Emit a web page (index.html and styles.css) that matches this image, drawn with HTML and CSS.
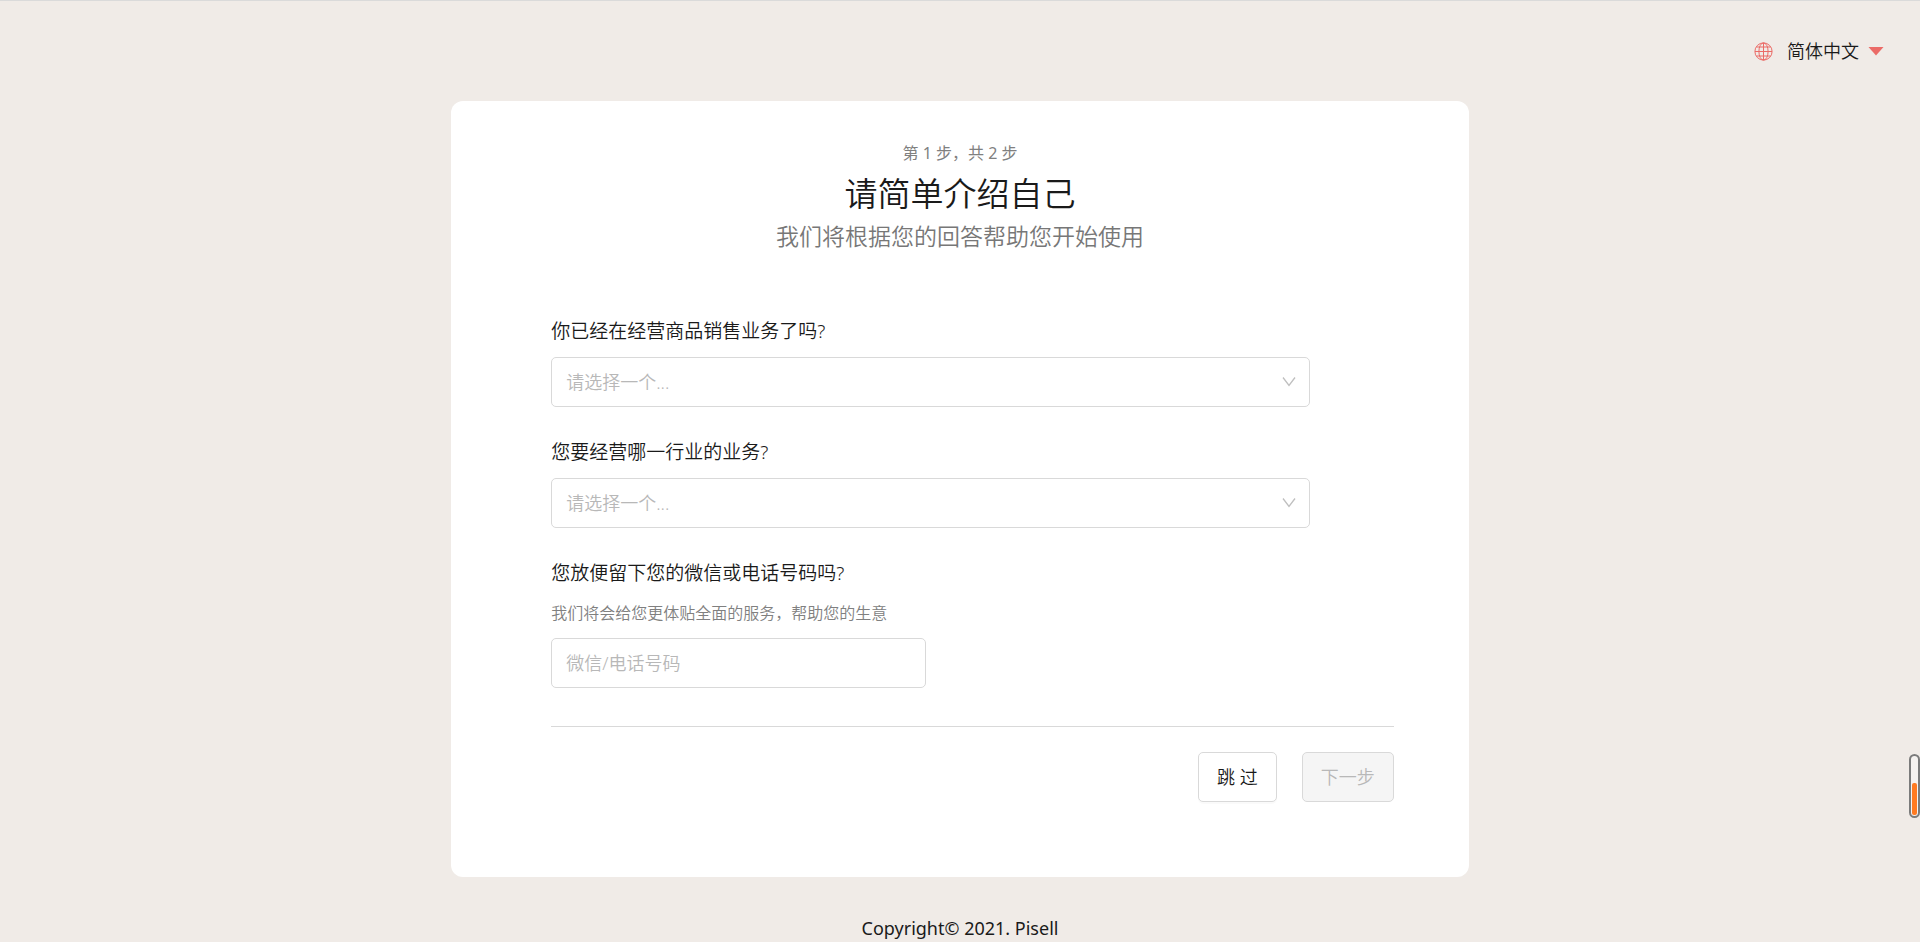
FILE: index.html
```html
<!DOCTYPE html>
<html lang="zh-CN">
<head>
<meta charset="utf-8">
<meta name="viewport" content="width=device-width, initial-scale=1">
<title>Pisell</title>
<link rel="stylesheet" href="styles.css">
</head>
<body>
<div class="page">
  <header class="header">
    <button class="language" type="button">
      <svg class="globe" viewBox="0 0 19 19" aria-hidden="true">
        <circle cx="9.5" cy="9.5" r="8.6"/>
        <ellipse cx="9.5" cy="9.5" rx="4.6" ry="8.6"/>
        <path d="M9.5 1v17M1 9.5h17M2.5 5h14M2.5 14h14"/>
      </svg>
      <span>简体中文</span>
      <svg class="caret" viewBox="0 0 16 9" aria-hidden="true"><path d="M0.5 0h15L8 8.5z"/></svg>
    </button>
  </header>

  <main class="card">
    <div class="intro">
      <p class="step">第 1 步，共 2 步</p>
      <h1 class="title">请简单介绍自己</h1>
      <p class="subtitle">我们将根据您的回答帮助您开始使用</p>
    </div>

    <form class="form">
      <div class="field">
        <label class="label" for="selling">你已经在经营商品销售业务了吗?</label>
        <div class="select-box">
          <select class="control select" id="selling"><option>请选择一个...</option></select>
          <svg class="chevron" viewBox="0 0 14 10" aria-hidden="true"><path d="M1 0.5l6 8 6-8"/></svg>
        </div>
      </div>

      <div class="field">
        <label class="label" for="industry">您要经营哪一行业的业务?</label>
        <div class="select-box">
          <select class="control select" id="industry"><option>请选择一个...</option></select>
          <svg class="chevron" viewBox="0 0 14 10" aria-hidden="true"><path d="M1 0.5l6 8 6-8"/></svg>
        </div>
      </div>

      <div class="field">
        <label class="label" for="contact">您放便留下您的微信或电话号码吗?</label>
        <p class="hint" id="contact-hint">我们将会给您更体贴全面的服务，帮助您的生意</p>
        <input class="control text-input" id="contact" type="text" placeholder="微信/电话号码" aria-describedby="contact-hint">
      </div>

      <div class="actions">
        <button class="button" type="button">跳 过</button>
        <button class="button" type="submit" disabled>下一步</button>
      </div>
    </form>
  </main>

  <footer class="footer">Copyright© 2021. Pisell</footer>
</div>
<div class="gauge"><div class="gauge-level"></div></div>
</body>
</html>
```
FILE: styles.css
```css
* {
  box-sizing: border-box;
}

body {
  margin: 0;
  background: #f0ebe7;
  color: #1a1a1a;
  font-family: "Noto Sans", "Noto Sans CJK SC", sans-serif;
  font-size: 18px;
  font-weight: 350;
  line-height: 28px;
}

button,
input,
select {
  font: inherit;
  color: inherit;
}

p,
h1 {
  margin: 0;
  font-weight: inherit;
}

.page {
  display: flex;
  flex-direction: column;
  min-height: 100vh;
  border-top: 1px solid #dadada;
}

.header {
  display: flex;
  justify-content: flex-end;
  align-items: center;
  height: 100px;
  padding: 0 36px;
}

.language {
  display: flex;
  align-items: center;
  padding: 0;
  border: 0;
  background: none;
  cursor: pointer;
}

.globe {
  width: 19px;
  height: 19px;
  margin-right: 14px;
  fill: none;
  stroke: #eb6b67;
  stroke-width: 1;
}

.caret {
  width: 16px;
  height: 9px;
  margin-left: 9px;
  fill: #eb6b67;
}

.card {
  width: 53%;
  min-width: 640px;
  margin: 0 auto;
  padding: 39px 75px 75px 100px;
  border-radius: 12px;
  background: #fff;
}

.intro {
  margin: 0 0 67px -25px;
  text-align: center;
}

.step {
  color: #808080;
  font-size: 16px;
  font-weight: 400;
  line-height: 26px;
}

.title {
  font-size: 33px;
  line-height: 56px;
}

.subtitle {
  color: #777;
  font-size: 23px;
  line-height: 28px;
}

.field {
  margin-bottom: 31px;
}

.label {
  display: block;
  margin-bottom: 12px;
  font-size: 19px;
}

.hint {
  margin-bottom: 11px;
  color: #808080;
  font-size: 16px;
  line-height: 28px;
}

.control {
  display: block;
  height: 50px;
  padding: 0 14px;
  border: 1px solid #d9d9d9;
  border-radius: 5px;
  background: #fff;
}

.select-box {
  position: relative;
  width: 90%;
}

.select {
  width: 100%;
  appearance: none;
  color: #b8b8b8;
}

.chevron {
  position: absolute;
  top: 20px;
  right: 14px;
  width: 14px;
  height: 10px;
  fill: none;
  stroke: #bfbfbf;
  stroke-width: 1.3;
  pointer-events: none;
}

.text-input {
  width: 375px;
}

.text-input::placeholder {
  color: #b8b8b8;
}

.actions {
  display: flex;
  justify-content: flex-end;
  gap: 25px;
  margin-top: 38px;
  padding-top: 25px;
  border-top: 1px solid #d9d9d9;
}

.button {
  height: 50px;
  padding: 0 18px;
  border: 1px solid #d9d9d9;
  border-radius: 5px;
  background: #fff;
  box-shadow: 0 2px 0 rgba(0, 0, 0, 0.02);
}

.button:disabled {
  background: #f5f5f5;
  color: #b8b8b8;
  box-shadow: none;
}

.footer {
  padding-top: 37px;
  font-weight: 400;
  text-align: center;
}

.gauge {
  position: fixed;
  right: 0;
  bottom: 124px;
  display: flex;
  align-items: flex-end;
  width: 11px;
  height: 64px;
  padding: 1px;
  border: 2px solid #7b7b7b;
  border-radius: 6px;
  background: #f5f2f0;
}

.gauge-level {
  width: 100%;
  height: 56%;
  border-radius: 2px;
  background: #ff7a21;
}
```
